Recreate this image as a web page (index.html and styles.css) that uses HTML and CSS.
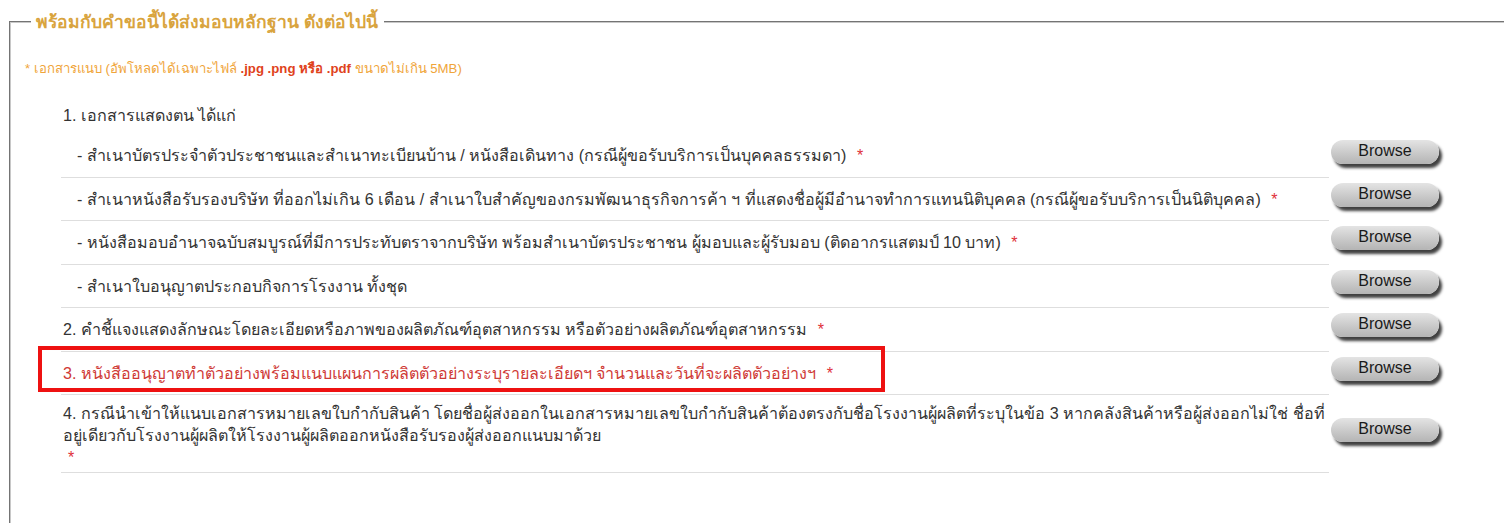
FILE: index.html
```html
<!DOCTYPE html>
<html lang="th">
<head>
  <meta charset="UTF-8" />
  <title>เอกสารหลักฐาน</title>
  <link rel="stylesheet" href="styles.css">
</head>
<body>
  <fieldset class="evidence">
    <legend>พร้อมกับคำขอนี้ได้ส่งมอบหลักฐาน ดังต่อไปนี้</legend>

    <p class="note">* เอกสารแนบ (อัพโหลดได้เฉพาะไฟล์ <b>.jpg .png หรือ .pdf</b> ขนาดไม่เกิน 5MB)</p>

    <table class="docs">
      <tr class="head">
        <td class="label">1. เอกสารแสดงตน ได้แก่</td>
        <td class="action"></td>
      </tr>
      <tr>
        <td class="label sub">- สำเนาบัตรประจำตัวประชาชนและสำเนาทะเบียนบ้าน / หนังสือเดินทาง (กรณีผู้ขอรับบริการเป็นบุคคลธรรมดา) <span class="req">*</span></td>
        <td class="action"><button class="browse">Browse</button></td>
      </tr>
      <tr>
        <td class="label sub">- สำเนาหนังสือรับรองบริษัท ที่ออกไม่เกิน 6 เดือน / สำเนาใบสำคัญของกรมพัฒนาธุรกิจการค้า ฯ ที่แสดงชื่อผู้มีอำนาจทำการแทนนิติบุคคล (กรณีผู้ขอรับบริการเป็นนิติบุคคล) <span class="req">*</span></td>
        <td class="action"><button class="browse">Browse</button></td>
      </tr>
      <tr>
        <td class="label sub">- หนังสือมอบอำนาจฉบับสมบูรณ์ที่มีการประทับตราจากบริษัท พร้อมสำเนาบัตรประชาชน ผู้มอบและผู้รับมอบ (ติดอากรแสตมป์ 10 บาท) <span class="req">*</span></td>
        <td class="action"><button class="browse">Browse</button></td>
      </tr>
      <tr>
        <td class="label sub">- สำเนาใบอนุญาตประกอบกิจการโรงงาน ทั้งชุด</td>
        <td class="action"><button class="browse">Browse</button></td>
      </tr>
      <tr>
        <td class="label">2. คำชี้แจงแสดงลักษณะโดยละเอียดหรือภาพของผลิตภัณฑ์อุตสาหกรรม หรือตัวอย่างผลิตภัณฑ์อุตสาหกรรม <span class="req">*</span></td>
        <td class="action"><button class="browse">Browse</button></td>
      </tr>
      <tr>
        <td class="label marked">3. หนังสืออนุญาตทำตัวอย่างพร้อมแนบแผนการผลิตตัวอย่างระบุรายละเอียดฯ จำนวนและวันที่จะผลิตตัวอย่างฯ <span class="req">*</span><div class="highlight"></div></td>
        <td class="action"><button class="browse">Browse</button></td>
      </tr>
      <tr class="tall">
        <td class="label">4. กรณีนำเข้าให้แนบเอกสารหมายเลขใบกำกับสินค้า โดยชื่อผู้ส่งออกในเอกสารหมายเลขใบกำกับสินค้าต้องตรงกับชื่อโรงงานผู้ผลิตที่ระบุในข้อ 3 หากคลังสินค้าหรือผู้ส่งออกไม่ใช่ ชื่อที่อยู่เดียวกับโรงงานผู้ผลิตให้โรงงานผู้ผลิตออกหนังสือรับรองผู้ส่งออกแนบมาด้วย<br><span class="req">*</span></td>
        <td class="action"><button class="browse">Browse</button></td>
      </tr>
    </table>
  </fieldset>
</body>
</html>
```

FILE: styles.css
```css
body {
  margin: 8px 0 0 0;
  font-family: Tahoma, "Liberation Sans", "Noto Sans", sans-serif;
  color: #333;
  background: #fff;
  overflow: hidden;
}
.evidence {
  margin: 0 0 0 9px;
  width: 1560px;
  min-height: 560px;
  border: 2px groove #c8c8c8;
  border-right: none;
  padding: 0 0 0 14px;
}
.evidence legend {
  margin-left: 6px;
  padding: 0 6px 0 5px;
  color: #d9a43e;
  font-weight: bold;
  font-size: 17.5px;
}
.note {
  margin: 22px 0 0 0;
  font-size: 13.2px;
  color: #f0a53a;
}
.note b {
  color: #e0421c;
}
.docs {
  margin: 16px 0 0 36px;
  border-collapse: collapse;
  table-layout: fixed;
  width: 1400px;
  font-size: 16.1px;
}
.docs td {
  padding: 0;
  vertical-align: middle;
}
.label {
  width: 1266px;
  height: 42.5px;
  padding-left: 2px !important;
  border-bottom: 1px solid #dedede;
  line-height: 22px;
}
.head .label {
  height: 39px;
  border-bottom: none;
}
.sub {
  padding-left: 16px !important;
}
.tall .label {
  height: 74px;
  padding-top: 3px !important;
}
.req {
  color: #e0313a;
  margin-left: 6px;
}
.tall .req {
  margin-left: 5px;
}
.marked {
  position: relative;
  color: #cf3a36;
}
.highlight {
  position: absolute;
  left: -23px;
  top: -6px;
  width: 839px;
  height: 38px;
  border: 4px solid #ee1111;
  pointer-events: none;
}
.action {
  padding-left: 2px !important;
  padding-bottom: 8px !important;
}
.browse {
  width: 108px;
  height: 24px;
  border: none;
  border-radius: 12px;
  background: linear-gradient(#e4e4e4, #c9c9c9 55%, #b4b4b4);
  box-shadow: 3px 4px 3px rgba(0, 0, 0, 0.75);
  font-family: "Liberation Sans", Arial, sans-serif;
  font-size: 16px;
  color: #1a1a1a;
  cursor: pointer;
  padding: 0 0 2px 0;
}
```
